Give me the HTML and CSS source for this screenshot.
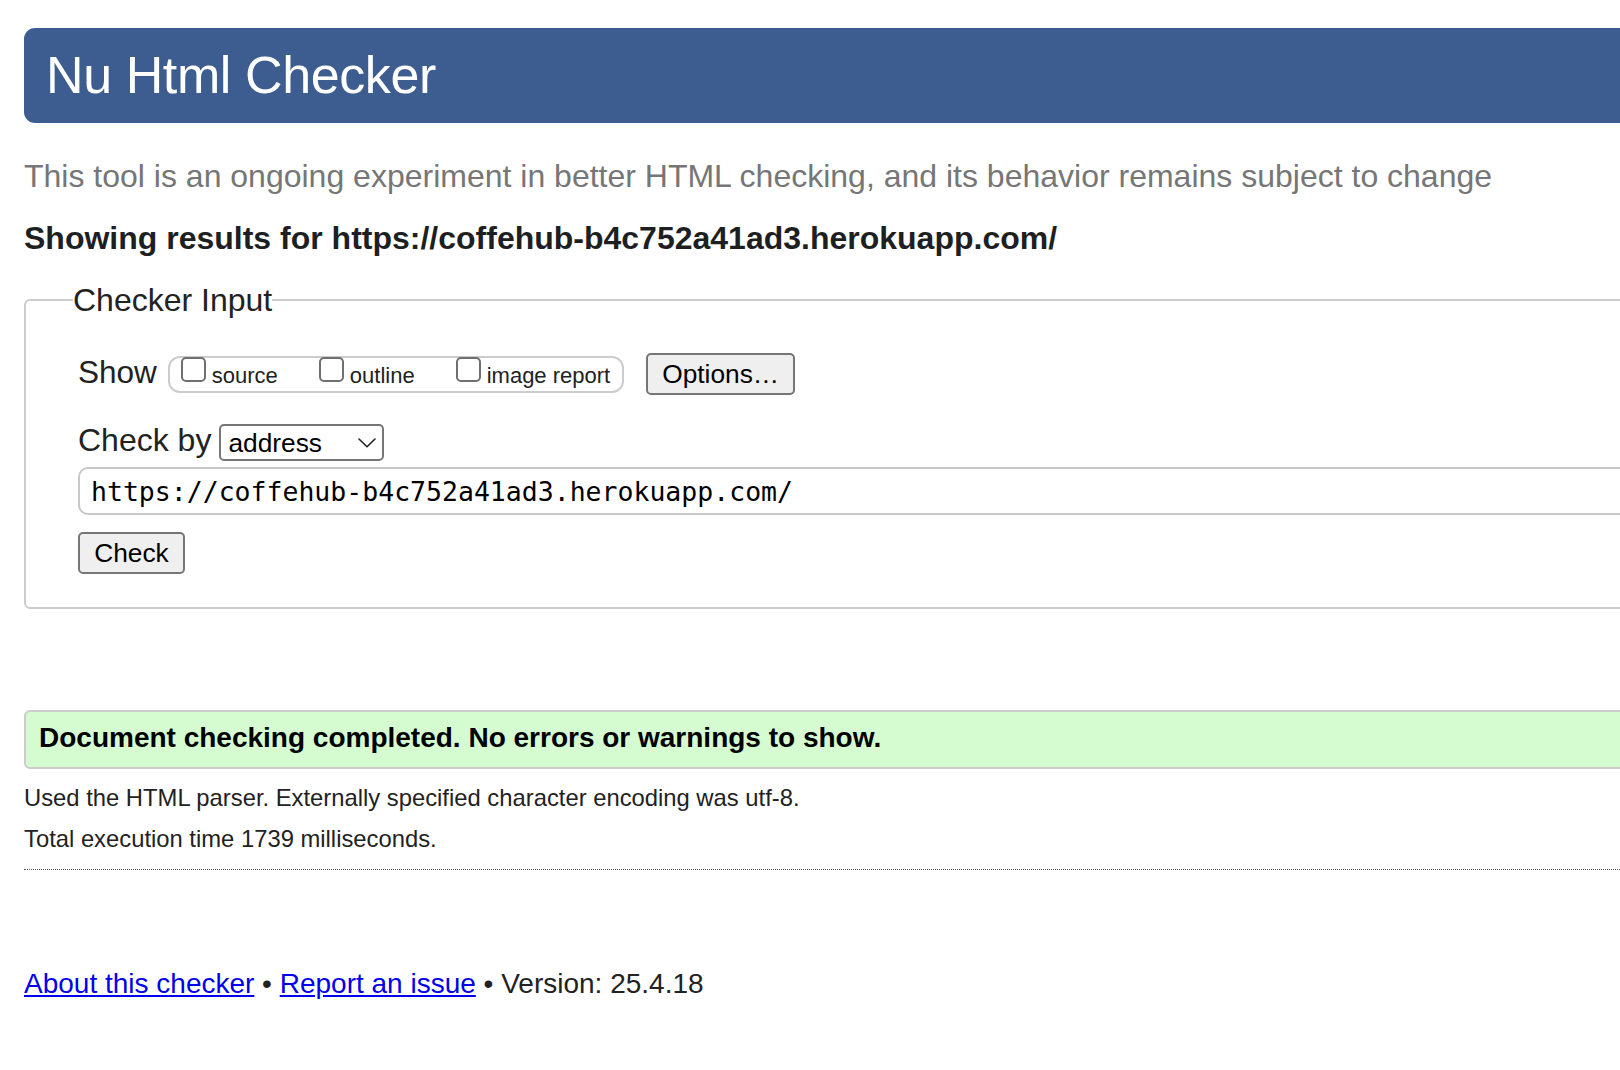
FILE: index.html
```html
<!DOCTYPE html>
<html lang="en">
<head>
<meta charset="utf-8">
<title>Showing results for https://coffehub-b4c752a41ad3.herokuapp.com/ - Nu Html Checker</title>
<link rel="stylesheet" href="styles.css">
</head>
<body>
<div class="page">
  <h1 class="masthead">Nu Html Checker</h1>
  <p class="tagline">This tool is an ongoing experiment in better HTML checking, and its behavior remains subject to change</p>
  <h2 class="results-for">Showing results for https://coffehub-b4c752a41ad3.herokuapp.com/</h2>

  <fieldset class="checker-input">
    <legend class="checker-legend">Checker Input</legend>
    <div class="fields">
      <div class="row show-row">
        <span class="row-label show-label">Show</span>
        <span class="show-group">
          <label class="opt"><input type="checkbox" class="cb"><span class="opt-text">source</span></label>
          <label class="opt"><input type="checkbox" class="cb"><span class="opt-text">outline</span></label>
          <label class="opt"><input type="checkbox" class="cb"><span class="opt-text">image report</span></label>
        </span>
        <button type="button" class="btn options-btn">Options…</button>
      </div>
      <div class="row checkby-row">
        <label class="row-label checkby-label" for="docselect">Check by</label>
        <span class="select-wrap">
          <select id="docselect" class="doc-select">
            <option selected>address</option>
            <option>file upload</option>
            <option>text input</option>
          </select>
          <svg class="chevron" viewBox="0 0 18 10" width="18" height="10" aria-hidden="true"><path d="M1 1 L9 8.8 L17 1" fill="none" stroke="#222" stroke-width="1.6" stroke-linecap="round" stroke-linejoin="round"/></svg>
        </span>
      </div>
      <input type="url" class="url-input" value="https://coffehub-b4c752a41ad3.herokuapp.com/">
      <button type="submit" class="btn check-btn">Check</button>
    </div>
  </fieldset>

  <p class="success">Document checking completed. No errors or warnings to show.</p>
  <p class="details first">Used the HTML parser. Externally specified character encoding was utf-8.</p>
  <p class="details second">Total execution time 1739 milliseconds.</p>
  <hr class="divider">
  <p class="footer"><a href="#">About this checker</a> • <a href="#">Report an issue</a> • Version: 25.4.18</p>
</div>
</body>
</html>
```

FILE: styles.css
```css
html, body {
  margin: 0;
  padding: 0;
  overflow: hidden;
  background: #ffffff;
}

body {
  font-family: "Liberation Sans", Arial, Helvetica, sans-serif;
  color: #222222;
}

.page {
  width: 1720px;
  padding: 28px 0 0 24px;
}

.masthead {
  margin: 0;
  height: 95px;
  line-height: 95px;
  padding-left: 22px;
  background: #3d5c8f;
  color: #ffffff;
  border-radius: 11px;
  font-size: 52px;
  font-weight: normal;
  letter-spacing: -0.4px;
}

.tagline {
  margin: 35px 0 0 0;
  font-size: 32px;
  line-height: 36px;
  color: #767676;
}

.results-for {
  margin: 26px 0 0 0;
  font-size: 32px;
  line-height: 36px;
  font-weight: bold;
  color: #1e1f23;
}

.checker-input {
  margin: 26px 0 0 0;
  padding: 35px 0 33px 47px;
  border: 2px solid #cccccc;
  border-radius: 6px;
  min-width: 0;
}

.checker-legend {
  padding: 0;
  font-size: 32px;
  line-height: 36px;
  color: #222222;
}

.fields {
  padding-left: 5px;
}

.row {
  display: flex;
  align-items: flex-start;
}

.row-label {
  font-size: 31.5px;
  color: #222222;
}

.show-row {
  height: 42px;
}

.show-label {
  line-height: 38px;
}

.show-group {
  margin-left: 11px;
  margin-top: 3px;
  height: 37px;
  box-sizing: border-box;
  display: flex;
  align-items: flex-start;
  gap: 41px;
  padding: 0 12px 0 11px;
  border: 2px solid #cccccc;
  border-radius: 12px;
}

.opt {
  display: flex;
  align-items: flex-start;
}

.cb {
  appearance: none;
  -webkit-appearance: none;
  width: 25px;
  height: 25px;
  margin: -1px 6px 0 0;
  box-sizing: border-box;
  border: 2px solid #6f6f6f;
  border-radius: 5px;
  background: #ffffff;
}

.opt-text {
  margin-top: 5px;
  font-size: 22px;
  line-height: 25px;
  color: #222222;
}

.btn {
  box-sizing: border-box;
  height: 42px;
  padding: 0;
  font-family: "Liberation Sans", Arial, Helvetica, sans-serif;
  font-size: 26.3px;
  color: #000000;
  background: #efefef;
  border: 2px solid #767676;
  border-radius: 5px;
}

.options-btn {
  margin-left: 22px;
  width: 149px;
}

.checkby-row {
  margin-top: 29px;
}

.checkby-label {
  font-size: 32px;
  line-height: 33px;
}

.select-wrap {
  position: relative;
  margin-left: 8px;
  display: block;
}

.doc-select {
  appearance: none;
  -webkit-appearance: none;
  display: block;
  box-sizing: border-box;
  width: 165px;
  height: 37px;
  margin: 0;
  padding: 0 0 0 7px;
  font-family: "Liberation Sans", Arial, Helvetica, sans-serif;
  font-size: 26.3px;
  color: #000000;
  background: #ffffff;
  border: 2px solid #767676;
  border-radius: 5px;
}

.chevron {
  position: absolute;
  left: 139px;
  top: 14px;
  pointer-events: none;
}

.url-input {
  display: block;
  box-sizing: border-box;
  margin: 6px 0 0 0;
  width: 1600px;
  height: 48px;
  padding: 0 0 0 11px;
  font-family: "DejaVu Sans Mono", "Liberation Mono", monospace;
  font-size: 26.5px;
  color: #000000;
  background: #ffffff;
  border: 2px solid #c8c8c8;
  border-radius: 10px;
  outline: none;
}

.check-btn {
  display: block;
  margin-top: 17px;
  width: 107px;
}

.success {
  margin: 101px 0 0 0;
  padding: 0 0 3px 13px;
  font-size: 28px;
  line-height: 52px;
  font-weight: bold;
  color: #000000;
  background: #d5fcd0;
  border: 2px solid #cccccc;
  border-radius: 6px;
}

.details {
  margin: 0;
  font-size: 23.8px;
  line-height: 28px;
  color: #222222;
}

.details.first {
  margin-top: 15px;
}

.details.second {
  margin-top: 13px;
}

.divider {
  margin: 16px 0 0 0;
  height: 0;
  border: 0;
  border-top: 1px dotted #555555;
}

.footer {
  margin: 98px 0 0 0;
  font-size: 28px;
  line-height: 32px;
  color: #222222;
}

.footer a {
  color: #0000ee;
  text-decoration: underline;
}
```
